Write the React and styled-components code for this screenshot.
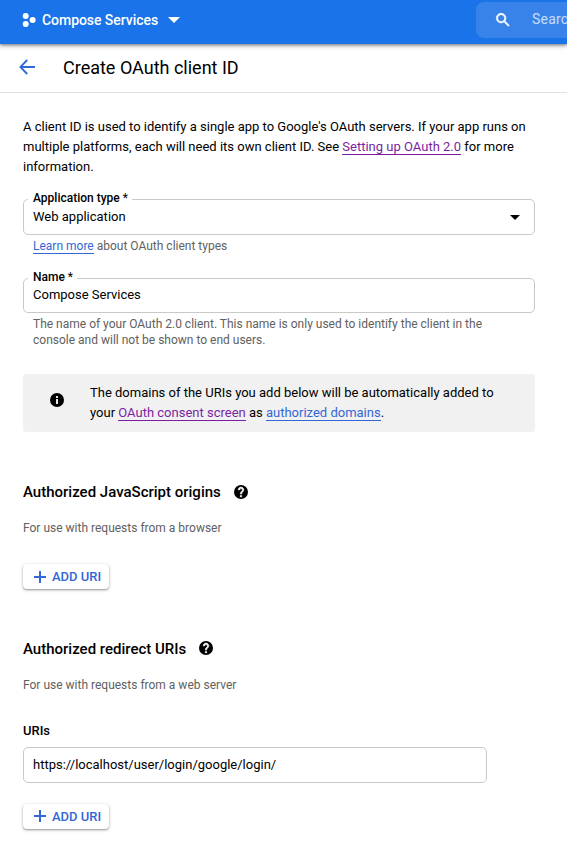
import React from "react";
import styled, { createGlobalStyle } from "styled-components";

const GlobalStyle = createGlobalStyle`
  *, *::before, *::after { box-sizing: border-box; }
  body {
    margin: 0;
    background: #fff;
    color: #000;
    font: 400 13px/20px Roboto, sans-serif;
    overflow: hidden;
  }
  h1, h2, p { margin: 0; }
`;

const Page = styled.div`
  width: 100%;
  height: 865px;
  overflow: hidden;
`;

const TopBar = styled.header`
  position: relative;
  display: flex;
  align-items: flex-start;
  justify-content: space-between;
  height: 44px;
  padding-left: 22px;
  background: #1a73e8;
  color: #fff;
  box-shadow: 0 1px 3px rgba(0, 0, 0, 0.4), 0 2px 5px rgba(0, 0, 0, 0.22);
`;

const ProjectPicker = styled.div`
  display: flex;
  align-items: center;
  height: 40px;
  font-size: 14px;
  font-weight: 500;
  white-space: nowrap;

  svg { flex: none; }
`;

const ProjectName = styled.span`
  margin: 0 10px 0 6px;
  letter-spacing: -0.05px;
`;

const SearchBox = styled.div`
  display: flex;
  align-items: center;
  width: 91px;
  height: 36px;
  margin-top: 2px;
  padding-left: 18px;
  gap: 20px;
  overflow: hidden;
  border-radius: 8px 0 0 8px;
  background: #3783ea;
  font-size: 14px;
  letter-spacing: 0.2px;
  white-space: nowrap;

  svg { flex: none; }
  span { opacity: 0.72; margin-top: -2px; }
`;

const TitleBar = styled.div`
  display: flex;
  align-items: center;
  height: 49px;
  padding: 0 0 1px 19px;
  gap: 28px;
  border-bottom: 1px solid #e0e0e0;

  svg { margin-bottom: 2px; }
`;

const Title = styled.h1`
  font-size: 18px;
  font-weight: 400;
  line-height: 24px;
`;

const Content = styled.main`
  width: 512px;
  margin: 24px 0 0 23px;
`;

const Intro = styled.p`
  white-space: nowrap;
`;

const Link = styled.a`
  color: ${(p) => (p.$visited ? "#7b1fa2" : "#3367d6")};
  border-bottom: 1px solid currentColor;
`;

const Field = styled.div`
  position: relative;
  display: flex;
  align-items: center;
  justify-content: space-between;
  width: ${(p) => p.$width || "100%"};
  height: ${(p) => p.$height || 36}px;
  margin-top: ${(p) => p.$top}px;
  padding: 0 14px ${(p) => p.$bottom || 0}px 9px;
  border: 1px solid #c9c9c9;
  border-radius: 5px;
`;

const FieldLabel = styled.label`
  position: absolute;
  top: -10px;
  left: 4px;
  padding: 0 4px 0 5px;
  background: #fff;
  font-size: 12px;
  font-weight: 500;
  line-height: 16px;
`;

const Required = styled.span`
  font-weight: 400;
`;

const Hint = styled.p`
  margin-top: ${(p) => p.$top}px;
  padding-left: ${(p) => p.$indent || 0}px;
  color: #616161;
  font-size: 12px;
  line-height: 16px;
  white-space: nowrap;
`;

const Notice = styled.div`
  display: flex;
  align-items: flex-start;
  height: 58px;
  margin-top: 26px;
  padding: 9px 0 0 27px;
  gap: 26px;
  border-radius: 3px;
  background: #f1f1f1;
  white-space: nowrap;

  svg { margin-top: 10px; }
`;

const SectionHeading = styled.h2`
  display: flex;
  align-items: center;
  height: 20px;
  margin-top: ${(p) => p.$top}px;
  gap: 13px;
  font-size: 15px;
  font-weight: 500;

  svg { margin-bottom: ${(p) => p.$iconLift || 0}px; }
`;

const AddButton = styled.button`
  display: flex;
  align-items: center;
  width: 86px;
  height: 25px;
  margin-top: ${(p) => p.$top}px;
  padding: 1px 0 0 11px;
  gap: 6px;
  border: 0;
  border-radius: 4px;
  background: #fff;
  color: #3367d6;
  font: 500 13px/16px Roboto, sans-serif;
  white-space: nowrap;
  box-shadow: 0 1px 2px rgba(0, 0, 0, 0.36), 0 1px 4px rgba(0, 0, 0, 0.12);

  svg { flex: none; margin-bottom: ${(p) => p.$iconLift || 0}px; }
`;

const ListLabel = styled.div`
  margin-top: 30px;
  font-size: 13px;
  font-weight: 500;
  line-height: 16px;
`;

const ProjectIcon = () => (
  <svg width="14" height="16" viewBox="0 0 14 16" fill="#fff">
    <circle cx="3.7" cy="4" r="3" />
    <circle cx="3.7" cy="12" r="3" />
    <circle cx="10.6" cy="8" r="3" />
  </svg>
);

const CaretIcon = ({ width, height, color }) => (
  <svg width={width} height={height} viewBox="0 0 10 5" preserveAspectRatio="none">
    <path d="M0 0h10L5 5z" fill={color} />
  </svg>
);

const SearchIcon = () => (
  <svg width="18" height="18" viewBox="0 0 24 24" fill="#fff">
    <path d="M15.5 14h-.79l-.28-.27A6.47 6.47 0 0 0 16 9.5 6.5 6.5 0 1 0 9.5 16c1.61 0 3.09-.59 4.23-1.57l.27.28v.79l5 4.99L20.49 19l-4.99-5zm-6 0C7.01 14 5 11.99 5 9.5S7.01 5 9.5 5 14 7.01 14 9.5 11.99 14 9.5 14z" stroke="#fff" strokeWidth=".7" />
  </svg>
);

const BackIcon = () => (
  <svg width="16" height="16" viewBox="0 0 16 16" fill="none" stroke="#3367d6" strokeWidth="1.8">
    <path d="M16 8H1.7M8.2 1L1.4 8l6.8 7" />
  </svg>
);

const InfoIcon = () => (
  <svg width="14" height="14" viewBox="0 0 14 14">
    <circle cx="7" cy="7" r="7" />
    <path d="M6.1 3.1h1.8v1.8H6.1zM6.1 6h1.8v4.9H6.1z" fill="#fff" />
  </svg>
);

const HelpIcon = () => (
  <svg width="14" height="14" viewBox="2 2 20 20">
    <circle cx="12" cy="12" r="10" />
    <path d="M13 19h-2v-2h2v2zm2.07-7.75l-.9.92C13.45 12.9 13 13.5 13 15h-2v-.5c0-1.1.45-2.1 1.17-2.83l1.24-1.26c.37-.36.59-.86.59-1.41 0-1.1-.9-2-2-2s-2 .9-2 2H8c0-2.21 1.79-4 4-4s4 1.79 4 4c0 .88-.36 1.68-.93 2.25z" fill="#fff" stroke="#fff" strokeWidth=".8" />
  </svg>
);

const PlusIcon = () => (
  <svg width="12" height="12" viewBox="0 0 12 12">
    <path d="M5 0h2v5h5v2H7v5H5V7H0V5h5z" fill="#3367d6" />
  </svg>
);

const AddUri = ({ top, iconLift }) => (
  <AddButton $top={top} $iconLift={iconLift} type="button">
    <PlusIcon />
    ADD URI
  </AddButton>
);

export default function App() {
  return (
    <Page>
      <GlobalStyle />
      <TopBar>
        <ProjectPicker>
          <ProjectIcon />
          <ProjectName>Compose Services</ProjectName>
          <CaretIcon width={12} height={6} color="#fff" />
        </ProjectPicker>
        <SearchBox>
          <SearchIcon />
          <span>Search</span>
        </SearchBox>
      </TopBar>
      <TitleBar>
        <BackIcon />
        <Title>Create OAuth client ID</Title>
      </TitleBar>
      <Content>
        <Intro>
          A client ID is used to identify a single app to Google's OAuth servers. If your app runs on
          <br />
          multiple platforms, each will need its own client ID. See{" "}
          <Link $visited>Setting up OAuth 2.0</Link> for more
          <br />
          information.
        </Intro>

        <Field $top={22}>
          <FieldLabel>
            Application type <Required>*</Required>
          </FieldLabel>
          <span>Web application</span>
          <CaretIcon width={10} height={5} color="#000" />
        </Field>
        <Hint $top={3} $indent={10}>
          <Link>Learn more</Link> about OAuth client types
        </Hint>

        <Field $top={24} $height={35} $bottom={2}>
          <FieldLabel>
            Name <Required>*</Required>
          </FieldLabel>
          <span>Compose Services</span>
        </Field>
        <Hint $top={3} $indent={10}>
          The name of your OAuth 2.0 client. This name is only used to identify the client in the
          <br />
          console and will not be shown to end users.
        </Hint>

        <Notice>
          <InfoIcon />
          <p>
            The domains of the URIs you add below will be automatically added to
            <br />
            your <Link $visited>OAuth consent screen</Link> as <Link>authorized domains</Link>.
          </p>
        </Notice>

        <SectionHeading $top={50}>
          Authorized JavaScript origins
          <HelpIcon />
        </SectionHeading>
        <Hint $top={18}>For use with requests from a browser</Hint>
        <AddUri top={28} />

        <SectionHeading $top={50} $iconLift={2}>
          Authorized redirect URIs
          <HelpIcon />
        </SectionHeading>
        <Hint $top={18}>For use with requests from a web server</Hint>
        <ListLabel>URIs</ListLabel>
        <Field $top={8} $width="464px">
          <span>https://localhost/user/login/google/login/</span>
        </Field>
        <AddUri top={21} iconLift={2} />
      </Content>
    </Page>
  );
}
